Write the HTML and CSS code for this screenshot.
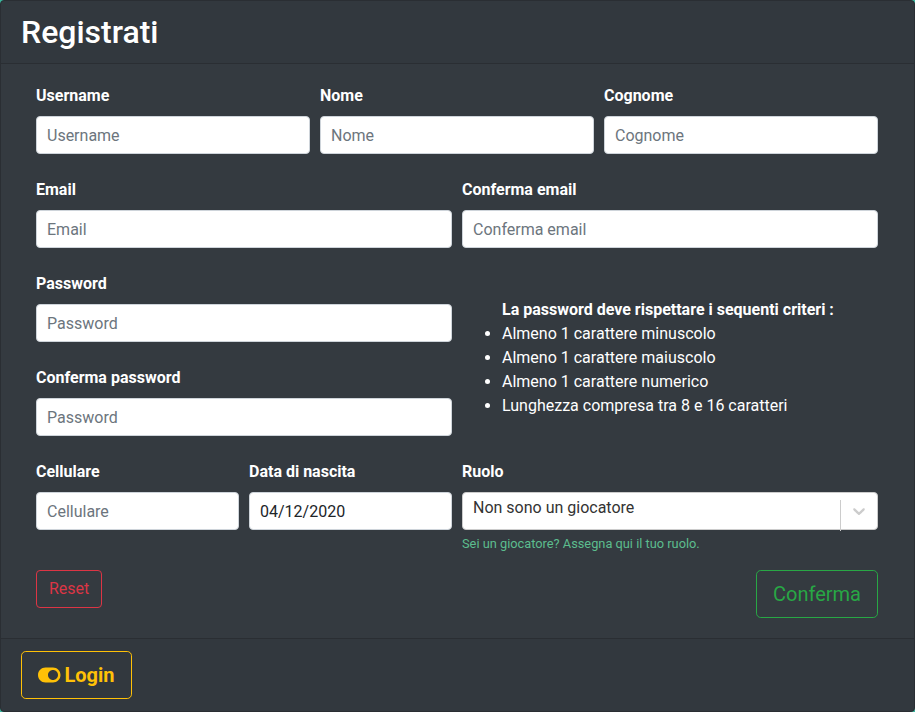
FILE: index.html
```html
<!DOCTYPE html>
<html lang="it">
<head>
<meta charset="utf-8">
<title>Registrati</title>
<link rel="stylesheet" href="styles.css">
</head>
<body>
<div class="card">
  <div class="card-header"><h1 class="title">Registrati</h1></div>
  <div class="card-body">
    <form class="form">
      <div class="row row-3">
        <div class="group"><label class="label">Username</label><input class="input" placeholder="Username"></div>
        <div class="group"><label class="label">Nome</label><input class="input" placeholder="Nome"></div>
        <div class="group"><label class="label">Cognome</label><input class="input" placeholder="Cognome"></div>
      </div>
      <div class="row row-4">
        <div class="group span-2"><label class="label">Email</label><input class="input" placeholder="Email"></div>
        <div class="group span-2"><label class="label">Conferma email</label><input class="input" placeholder="Conferma email"></div>
      </div>
      <div class="row row-4">
        <div class="span-2">
          <div class="group"><label class="label">Password</label><input class="input" type="password" placeholder="Password"></div>
          <div class="group"><label class="label">Conferma password</label><input class="input" type="password" placeholder="Password"></div>
        </div>
        <div class="span-2 criteria">
          <p class="criteria-title">La password deve rispettare i sequenti criteri :</p>
          <ul class="criteria-list">
            <li>Almeno 1 carattere minuscolo</li>
            <li>Almeno 1 carattere maiuscolo</li>
            <li>Almeno 1 carattere numerico</li>
            <li>Lunghezza compresa tra 8 e 16 caratteri</li>
          </ul>
        </div>
      </div>
      <div class="row row-4">
        <div class="group group-last"><label class="label">Cellulare</label><input class="input" placeholder="Cellulare"></div>
        <div class="group group-last"><label class="label">Data di nascita</label><input class="input input-value" value="04/12/2020"></div>
        <div class="group group-last span-2"><label class="label">Ruolo</label>
          <div class="select">
            <div class="select-value">Non sono un giocatore</div>
            <span class="select-sep"></span>
            <div class="select-indicator">
              <svg viewBox="0 0 20 20" width="20" height="20"><path fill="#cccccc" d="M4.516 7.548c0.436-0.446 1.043-0.481 1.576 0l3.908 3.747 3.908-3.747c0.533-0.481 1.141-0.446 1.574 0 0.436 0.445 0.408 1.197 0 1.615-0.406 0.418-4.695 4.502-4.695 4.502-0.217 0.223-0.502 0.335-0.787 0.335s-0.57-0.112-0.789-0.335c0 0-4.287-4.084-4.695-4.502s-0.436-1.170 0-1.615z"/></svg>
            </div>
          </div>
          <small class="help">Sei un giocatore? Assegna qui il tuo ruolo.</small>
        </div>
      </div>
      <div class="actions">
        <button type="button" class="btn btn-danger">Reset</button>
        <button type="button" class="btn btn-lg btn-success">Conferma</button>
      </div>
    </form>
  </div>
  <div class="card-footer">
    <button type="button" class="btn btn-lg btn-warning btn-login"><svg class="toggle" viewBox="0 0 576 512"><path fill="currentColor" d="M384 64H192C86 64 0 150 0 256s86 192 192 192h192c106 0 192-86 192-192S490 64 384 64zm0 320c-70.8 0-128-57.3-128-128 0-70.8 57.3-128 128-128 70.8 0 128 57.3 128 128 0 70.8-57.3 128-128 128z"/></svg> Login</button>
  </div>
</div>
</body>
</html>
```
FILE: styles.css
```css
* { box-sizing: border-box; }
html, body { margin: 0; padding: 0; }
body {
  background: #3cb8a0;
  font-family: Roboto, "Liberation Sans", sans-serif;
  font-size: 16px;
  line-height: 1.5;
  color: #fff;
}
.card {
  width: 915px;
  height: 712px;
  background: #343a40;
  border: 1px solid #2a2e33;
  border-radius: 4px;
  display: flex;
  flex-direction: column;
  overflow: hidden;
}
.card-header {
  padding: 12px 20px;
  background: rgba(0,0,0,.03);
  border-bottom: 1px solid #2a2e33;
}
.title {
  margin: 0;
  font-size: 32px;
  font-weight: 500;
  line-height: 1.2;
}
.card-body {
  flex: 1;
  padding: 20px;
}
.form { padding: 0 16px 0 15px; }
.row {
  display: grid;
  column-gap: 10px;
}
.row-3 { grid-template-columns: repeat(3, 1fr); }
.row-4 { grid-template-columns: repeat(4, 1fr); }
.span-2 { grid-column: span 2; }
.group { margin-bottom: 24px; }
.group-last { margin-bottom: 16px; }
.label {
  display: block;
  font-weight: 700;
  margin-bottom: 8px;
}
.input {
  display: block;
  width: 100%;
  height: 38px;
  padding: 6px 10px;
  font-family: inherit;
  font-size: 16px;
  line-height: 1.5;
  color: #495057;
  background: #fff;
  border: 1px solid #ced4da;
  border-radius: 4px;
  outline: none;
}
.input::placeholder { color: #6c757d; opacity: 1; }
.input-value { color: #212529; }
.criteria { padding-top: 26px; }
.criteria-title {
  margin: 0;
  padding-left: 40px;
  font-weight: 700;
}
.criteria-list {
  margin: 0;
  padding-left: 40px;
}
.select {
  display: flex;
  height: 38px;
  background: #fff;
  border: 1px solid #cccccc;
  border-radius: 4px;
}
.select-value {
  flex: 1;
  padding: 3px 10px 0;
  color: #333;
  line-height: 24px;
}
.select-sep {
  width: 1px;
  background: #cccccc;
  margin-top: 7px;
  margin-bottom: -2px;
}
.select-indicator {
  width: 36px;
  padding: 8px;
  display: flex;
  align-items: center;
}
.select-indicator svg { display: block; }
.help {
  display: block;
  margin-top: 4px;
  font-size: 12.8px;
  line-height: 1.5;
  color: #5cbd8e;
}
.actions {
  display: flex;
  justify-content: space-between;
  align-items: flex-start;
}
.btn {
  font-family: inherit;
  font-size: 16px;
  line-height: 1.5;
  padding: 6px 12px;
  background: transparent;
  border: 1px solid;
  border-radius: 4px;
}
.btn-lg {
  font-size: 20px;
  padding: 8px 16px;
  border-radius: 4.8px;
}
.btn-danger { color: #dc3545; border-color: #dc3545; }
.btn-success { color: #28a745; border-color: #28a745; }
.btn-warning { color: #ffc107; border-color: #ffc107; }
.card-footer {
  padding: 12px 20px;
  background: rgba(0,0,0,.03);
  border-top: 1px solid #2a2e33;
}
.btn-login {
  font-weight: 700;
  display: inline-flex;
  align-items: center;
  gap: 4px;
}
.toggle {
  width: 22.5px;
  height: 20px;
  display: block;
}
```
